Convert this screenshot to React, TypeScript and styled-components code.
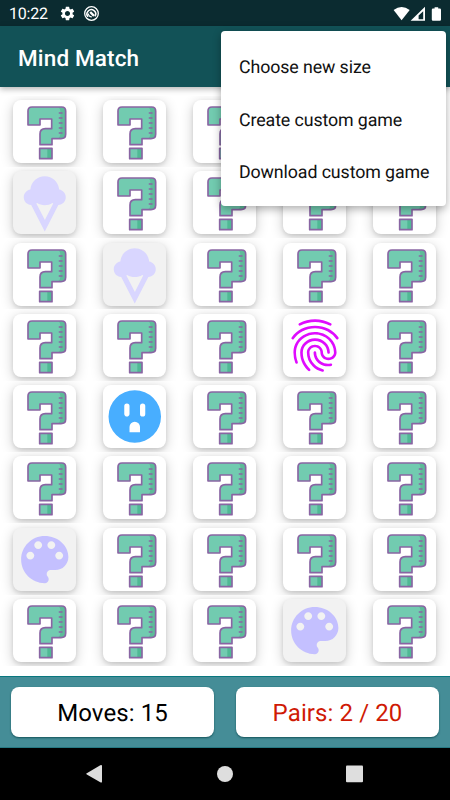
import React from 'react';
import styled, { createGlobalStyle } from 'styled-components';
import { MdFingerprint, MdSettings } from 'react-icons/md';

const GlobalStyle = createGlobalStyle`
  * { box-sizing: border-box; }
  body {
    margin: 0;
    background: #fff;
    font-family: Roboto, "Liberation Sans", sans-serif;
    text-rendering: geometricPrecision;
  }
`;

const Screen = styled.div`
  position: relative;
  width: 450px;
  height: 800px;
  display: flex;
  flex-direction: column;
  overflow: hidden;
  background: #fff;
`;

const StatusBar = styled.div`
  height: 26px;
  flex: none;
  display: flex;
  align-items: center;
  padding: 1px 8px 0 9px;
  background: #0b2b30;
  color: #fff;
`;

const Clock = styled.span`
  width: 50px;
  font-size: 16px;
  line-height: 24px;
  letter-spacing: -0.2px;
`;

const Notices = styled.div`
  display: flex;
  align-items: center;
  gap: 7px;
  svg { display: block; }
`;

const Signals = styled.div`
  margin-left: auto;
  display: flex;
  align-items: center;
  svg { display: block; }
`;

const AppBar = styled.header`
  height: 61px;
  flex: none;
  display: flex;
  align-items: center;
  padding: 4px 18px 0;
  background: #125257;
  box-shadow: 0 2px 6px rgba(0, 0, 0, 0.3);
  z-index: 1;
`;

const Title = styled.h1`
  margin: 0;
  color: #fff;
  font-size: 22.5px;
  font-weight: 500;
  letter-spacing: 0.15px;
`;

const Board = styled.main`
  flex: 1;
  padding-top: 8.5px;
  display: grid;
  grid-template-columns: repeat(5, 90px);
  grid-auto-rows: 71.3px;
`;

const Cell = styled.div`
  display: flex;
  justify-content: center;
  padding: 4.5px 1px 0 0;
  overflow: hidden;
`;

const Card = styled.div<{ $matched: boolean }>`
  width: 63px;
  height: 63px;
  border-radius: 8px;
  background: ${p => (p.$matched ? '#f2f2f2' : '#fff')};
  box-shadow: 0 2px 4px rgba(0, 0, 0, 0.1), 0 3px 13px rgba(0, 0, 0, 0.2);
  svg { display: block; width: 63px; height: 63px; }
`;

const ScoreBar = styled.footer`
  height: 72px;
  flex: none;
  display: grid;
  grid-template-columns: 1fr 1fr;
  gap: 22px;
  padding: 10px 11px;
  background: #458d97;
  border-top: 1px solid #08777f;
  border-bottom: 1px solid #267983;
`;

const Score = styled.div<{ $color: string }>`
  height: 50px;
  display: flex;
  align-items: center;
  justify-content: center;
  padding-top: 2px;
  border-radius: 8px;
  background: #fff;
  color: ${p => p.$color};
  font-size: 24px;
  letter-spacing: 0.1px;
  white-space: pre;
  box-shadow: 0 1px 2px rgba(0, 60, 66, 0.7);
`;

const NavBar = styled.nav`
  height: 52px;
  flex: none;
  display: flex;
  background: #000;
  svg { display: block; }
`;

const Menu = styled.ul`
  position: absolute;
  z-index: 2;
  top: 31px;
  right: 4px;
  width: 225px;
  height: 175px;
  margin: 0;
  padding: 10px 0 0;
  list-style: none;
  border-radius: 4px;
  background: #fff;
  box-shadow: 0 3px 9px rgba(0, 0, 0, 0.32);
`;

const MenuItem = styled.li`
  height: 52.5px;
  padding-left: 18px;
  line-height: 53px;
  font-size: 17.8px;
  letter-spacing: -0.1px;
  color: #111;
  white-space: nowrap;
`;

type Face = 'question' | 'cone' | 'finger' | 'outlet' | 'palette';

const Question = () => (
  <svg viewBox="0 0 189 189">
    <path d="M45 75V33Q45 21 57 21H146Q158 21 158 33V103Q158 116 144 116H117V134H81V102Q81 86 97 86H116V57H81V75Z" fill="#72cbb0" />
    <path d="M140 22H146Q158 22 158 33V103Q158 116 144 116H134Q142 112 142 102V33Q142 25 136 22Z" fill="#5dbb99" />
    <path d="M80 145H117V176H80Z" fill="#72cbb0" />
    <path d="M103 145H117V176H103Z" fill="#50b995" />
    <path d="M45 75V33Q45 21 57 21H146Q158 21 158 33V103Q158 116 144 116H117V134H81V102Q81 86 97 86H116V57H81V75ZM80 145H117V176H80Z" fill="none" stroke="#8965a3" strokeWidth="5" strokeLinejoin="round" />
    <path d="M139 39H147M139 54H147M139 69H147M139 84H147M139 99H147" stroke="#8965a3" strokeWidth="4.5" strokeLinecap="round" />
  </svg>
);

const Cone = () => (
  <svg viewBox="-.1 0 24 24" fill="#d9d6ff">
    <path d="M8.79 12.4l3.26 6.22 3.17-6.21c-.11-.08-.21-.16-.3-.25-.86.53-1.86.84-2.92.84s-2.06-.32-2.91-.84c-.1.09-.2.17-.3.24zm-1.96.59C5.25 12.9 4 11.6 4 10c0-1.49 1.09-2.73 2.52-2.96C6.75 4.22 9.12 2 12 2s5.25 2.22 5.48 5.04C18.91 7.27 20 8.51 20 10c0 1.6-1.25 2.9-2.83 2.99L12 23 6.83 12.99z" />
  </svg>
);

const Outlet = () => (
  <svg viewBox="-.1 0 24 24" fill="#48aeff" fillRule="evenodd">
    <path d="M12 2a10 10 0 1 0 0 20 10 10 0 0 0 0-20zM9 12c-.55 0-1-.45-1-1V8a1 1 0 0 1 2 0v3c0 .55-.45 1-1 1zm5 6h-4v-2a2 2 0 0 1 4 0v2zm2-7a1 1 0 0 1-2 0V8a1 1 0 0 1 2 0v3z" />
  </svg>
);

const Palette = () => (
  <svg viewBox="-.1 0 24 24" fill="#c4c0ff">
    <path d="M12 3c-4.97 0-9 4.03-9 9s4.03 9 9 9c.83 0 1.5-.67 1.5-1.5 0-.39-.15-.74-.39-1.01-.23-.26-.38-.61-.38-.99 0-.83.67-1.5 1.5-1.5H16c2.76 0 5-2.24 5-5 0-4.42-4.03-8-9-8zm-5.5 9c-.83 0-1.5-.67-1.5-1.5S5.67 9 6.5 9 8 9.67 8 10.5 7.33 12 6.5 12zm3-4C8.67 8 8 7.33 8 6.5S8.67 5 9.5 5s1.5.67 1.5 1.5S10.33 8 9.5 8zm5 0c-.83 0-1.5-.67-1.5-1.5S13.67 5 14.5 5s1.5.67 1.5 1.5S15.33 8 14.5 8zm3 4c-.83 0-1.5-.67-1.5-1.5S16.67 9 17.5 9s1.5.67 1.5 1.5-.67 1.5-1.5 1.5z" />
  </svg>
);

const faces: Record<Face, React.ReactNode> = {
  question: <Question />,
  cone: <Cone />,
  finger: <MdFingerprint color="#df0bff" viewBox="-.2 0 24 24" />,
  outlet: <Outlet />,
  palette: <Palette />,
};

const revealed: Record<number, Face> = {
  5: 'cone',
  11: 'cone',
  18: 'finger',
  21: 'outlet',
  30: 'palette',
  38: 'palette',
};

const cards: Face[] = Array.from({ length: 40 }, (_, i) => revealed[i] ?? 'question');

export default function App() {
  return (
    <Screen>
      <GlobalStyle />
      <StatusBar>
        <Clock>10:22</Clock>
        <Notices>
          <MdSettings size={17} />
          <svg width="17" height="17" viewBox="0 0 17 17" fill="none" stroke="#fff">
            <circle cx="8.5" cy="8.5" r="6.8" strokeWidth="1.3" />
            <path d="M5.1 11.8A4.3 4.3 0 1 1 11.9 11.4" strokeWidth="1.6" />
            <path d="M7.2 7L11 10.9" strokeWidth="2.4" />
            <path d="M5.3 8.6A3.4 3.4 0 0 0 8.8 11.9" strokeWidth="1.1" />
          </svg>
        </Notices>
        <Signals>
          <svg width="49" height="16" viewBox="0 0 49 16" fill="#fff">
            <path d="M.6 3.9Q8.6-1.8 16.7 3.9L8.6 14.2Z" />
            <path fillRule="evenodd" d="M17.6 14.8L32 .8V14.8ZM25.6 13.2H30.2V5.2L25.6 9.5Z" />
            <path d="M41.6 1.2h3.6v1.4h1.6q1.2 0 1.2 1.2v9.8q0 1.2-1.2 1.2h-6.8q-1.2 0-1.2-1.2V3.8q0-1.2 1.2-1.2h1.6z" />
          </svg>
        </Signals>
      </StatusBar>
      <AppBar>
        <Title>Mind Match</Title>
      </AppBar>
      <Board>
        {cards.map((face, i) => (
          <Cell key={i}>
            <Card $matched={face === 'cone' || face === 'palette'}>{faces[face]}</Card>
          </Cell>
        ))}
      </Board>
      <ScoreBar>
        <Score $color="#000">Moves: 15</Score>
        <Score $color="#cf1a05">Pairs: 2 / 20</Score>
      </ScoreBar>
      <NavBar>
        <svg width="450" height="52" viewBox="0 0 450 52" fill="#dedede">
          <path d="M86.8 25.2L100.3 17.2Q102 16.4 102 18V33.4Q102 35.2 100.3 34.3L86.8 26.5Q85.4 25.8 86.8 25.2Z" />
          <circle cx="225" cy="26" r="8" />
          <rect x="346" y="17.5" width="17" height="16.7" rx="1" />
        </svg>
      </NavBar>
      <Menu>
        <MenuItem>Choose new size</MenuItem>
        <MenuItem>Create custom game</MenuItem>
        <MenuItem>Download custom game</MenuItem>
      </Menu>
    </Screen>
  );
}
